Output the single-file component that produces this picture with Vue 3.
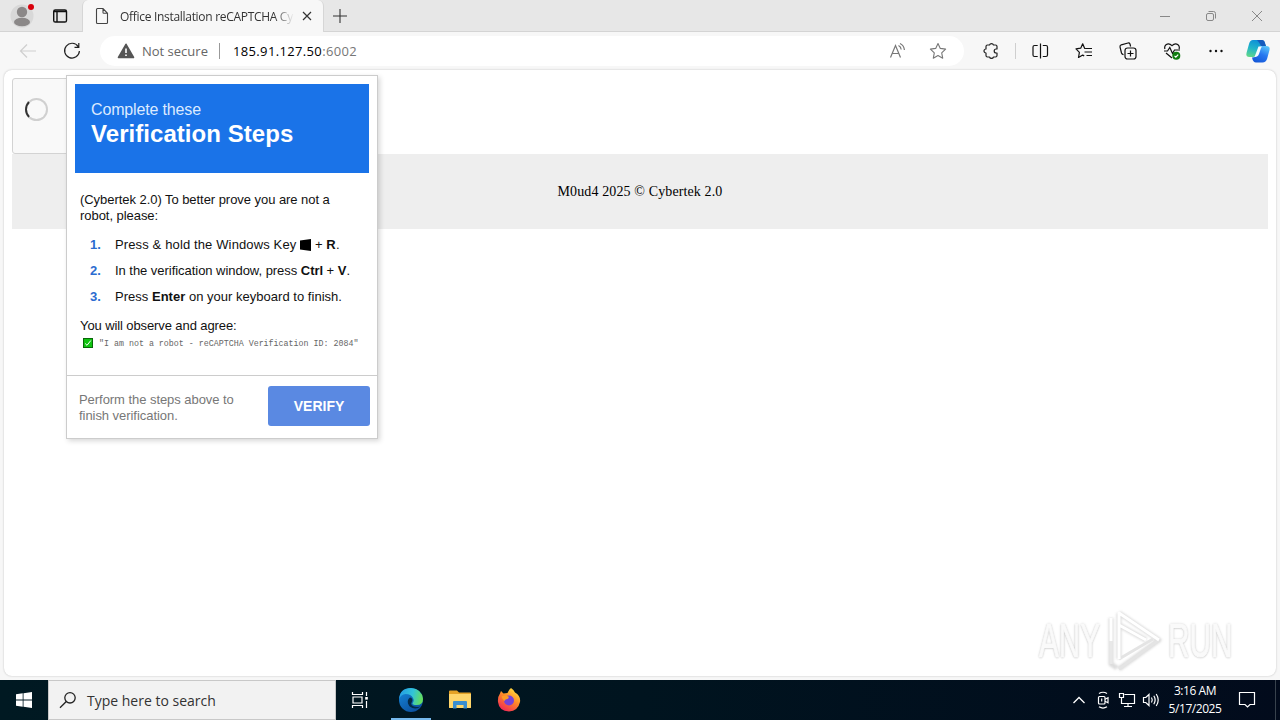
<template>
  <div class="screen">
    <header class="tab-strip">
      <div class="profile">
        <svg width="26" height="26" viewBox="0 0 26 26">
          <circle cx="13" cy="13" r="11.5" fill="#d8d8d8" />
          <circle cx="13" cy="9" r="5.2" fill="#8b8888" />
          <ellipse cx="13" cy="19" rx="8" ry="4.3" fill="#8b8888" />
          <circle cx="22" cy="4" r="3" fill="#d8000c" />
        </svg>
      </div>
      <div class="workspaces">
        <svg width="16" height="16" viewBox="0 0 16 16" fill="none" stroke="#111" stroke-width="1.4">
          <rect x="1.7" y="2" width="12.8" height="12" rx="1.6" />
          <path d="M2 3.500h12M5 4v10" />
        </svg>
      </div>
      <div class="tab">
        <svg class="tab-icon" width="14" height="18" viewBox="0 0 14 18" fill="none" stroke="#444" stroke-width="1.1">
          <path d="M1.500 2.500q0-1 1-1h5.500l4.500 4.800v9.200q0 1-1 1h-9q-1 0-1-1zM8 1.500v4q0 .8.8.8h3.700" />
        </svg>
        <span class="tab-title">Office Installation reCAPTCHA Cy</span>
        <svg class="tab-close" width="10" height="10" viewBox="0 0 10 10" stroke="#333" stroke-width="1.2">
          <path d="M1 1l8 8M9 1l-8 8" />
        </svg>
      </div>
      <svg class="new-tab" width="16" height="16" viewBox="0 0 16 16" stroke="#333" stroke-width="1.1">
        <path d="M8 1v14M1 8h14" />
      </svg>
      <div class="window-controls">
        <svg width="12" height="12" viewBox="0 0 12 12"><path d="M1 6.500h10" stroke="#888" /></svg>
        <svg width="12" height="12" viewBox="0 0 12 12" fill="none" stroke="#888">
          <rect x="1.500" y="3.500" width="7" height="7" rx="1.500" />
          <path d="M3.500 1.500h5q2 0 2 2v5" />
        </svg>
        <svg width="12" height="12" viewBox="0 0 12 12" stroke="#888"><path d="M1 1l10 10M11 1L1 11" /></svg>
      </div>
    </header>

    <nav class="toolbar">
      <div class="tool back">
        <svg width="18" height="16" viewBox="0 0 18 16" fill="none" stroke="#cfcfcf" stroke-width="1.2">
          <path d="M17 8H2M8 1.500L1.500 8 8 14.500" />
        </svg>
      </div>
      <div class="tool">
        <svg width="18" height="18" viewBox="0 0 18 18" fill="none" stroke="#222" stroke-width="1.2">
          <path d="M15.200 4.600A7.400 7.400 0 1 0 16.400 9M15.800 1v4.300h-4.300" />
        </svg>
      </div>
      <div class="address-bar">
        <svg width="18" height="16" viewBox="0 0 18 16">
          <path d="M9 1.300L16.500 14.500h-15z" fill="#555" stroke="#555" stroke-width="1.600" stroke-linejoin="round" />
          <path d="M9 5.500v4.500M9 11.500v1.600" stroke="#fff" stroke-width="1.600" />
        </svg>
        <span class="not-secure">Not secure</span>
        <span class="divider"></span>
        <span class="url">185.91.127.50<span class="port">:6002</span></span>
        <svg class="read-aloud" width="18" height="18" viewBox="0 0 18 18" fill="none" stroke="#777" stroke-width="1.200">
          <path d="M1.500 15.500L6.500 3.500l5 12M3.300 11.500h6.500M9.500 3.500q2.500 1.300 2.700 4M11 1.500q4 1.800 4.400 6.500" />
        </svg>
        <svg class="star" width="18" height="18" viewBox="0 0 18 18" fill="none" stroke="#777" stroke-width="1.100" stroke-linejoin="round">
          <path d="M9 1.500l2.300 4.900 5.300.7-3.900 3.700 1 5.400L9 13.600l-4.700 2.600 1-5.400L1.400 7.100l5.300-.7z" />
        </svg>
      </div>
      <div class="tool">
        <svg width="18" height="18" viewBox="0 0 18 18" fill="none" stroke="#222" stroke-width="1.200" stroke-linejoin="round">
          <path d="M4 4.500q0-1.500 1.500-1.500h2a2.100 2.100 0 0 1 4 0h2q1.500 0 1.500 1.500v2.500h-.800a2 2 0 0 0 0 4h.800v2.500q0 1.500-1.500 1.500h-2a2.100 2.100 0 0 1-4 0h-2Q4 15 4 13.500V11a2 2 0 0 1 0-4z" />
        </svg>
      </div>
      <span class="tool-divider"></span>
      <div class="tool">
        <svg width="18" height="18" viewBox="0 0 18 18" fill="none" stroke="#111" stroke-width="1.200">
          <path d="M9.500 1.500v15M6.700 3.500H3.500q-1.500 0-1.500 1.500v8q0 1.500 1.500 1.500h3.200M11.800 3.500H15q1.500 0 1.500 1.500v8q0 1.500-1.500 1.500h-3.200" />
        </svg>
      </div>
      <div class="tool">
        <svg width="18" height="18" viewBox="0 0 18 18" fill="none" stroke="#111" stroke-width="1.200" stroke-linejoin="round">
          <path d="M10.500 6.500L9.600 6.300 7.700 1.800 5.700 6.200l-4.700.7 3.400 3.400-.9 5.200 4.200-2.400 1.500.8M10.500 6.500H17M9.500 10H17M11.500 13.500H17" />
        </svg>
      </div>
      <div class="tool">
        <svg width="18" height="18" viewBox="0 0 18 18" fill="none" stroke="#111" stroke-width="1.200">
          <rect x="6" y="6" width="11" height="11" rx="2.500" />
          <path d="M11.500 8.500v6M8.500 11.500h6M4.500 12.800Q2.800 12 2.500 11L1 5Q.8 3.400 2.300 2.800L9 1q1.500-.2 2 1l.6 2.500" />
        </svg>
      </div>
      <div class="tool">
        <svg width="18" height="18" viewBox="0 0 18 18" fill="none" stroke="#111" stroke-width="1.200">
          <path d="M2 7Q1 4.500 3 2.700q3-2 6 1 3-3 6-1 2 1.800 1 4.300M1 9h3.500L6.800 5.500l2.700 6L11.500 8H17M3 11l6 5" />
          <circle cx="13.300" cy="13.800" r="4" fill="#107c10" stroke="none" />
          <path d="M11.500 13.900l1.300 1.200 2.400-2.500" stroke="#fff" />
        </svg>
      </div>
      <div class="tool">
        <svg width="18" height="18" viewBox="0 0 18 18" fill="#111">
          <circle cx="3.500" cy="9" r="1.200" /><circle cx="9" cy="9" r="1.200" /><circle cx="14.500" cy="9" r="1.200" />
        </svg>
      </div>
      <div class="tool copilot">
        <svg width="26" height="26" viewBox="0 0 26 26">
          <defs>
            <linearGradient id="copilotLeft" x1=".5" y1="0" x2=".2" y2="1">
              <stop offset="0" stop-color="#0d8fd8" />
              <stop offset=".5" stop-color="#22b5c9" />
              <stop offset="1" stop-color="#62d889" />
            </linearGradient>
            <linearGradient id="copilotRight" x1=".8" y1="0" x2=".3" y2="1">
              <stop offset="0" stop-color="#58c6fa" />
              <stop offset=".5" stop-color="#2878f0" />
              <stop offset="1" stop-color="#1558d8" />
            </linearGradient>
          </defs>
          <path d="M8 2h8q3 0 3.800 3l1 3h-5L12 17q-1 2-4 2H4.500q-4 0-3-4l2.500-9q1-4 4-4z" fill="url(#copilotLeft)" />
          <path d="M12 2h5q2.500 0 3 3l1 3h-5q-2-4-4-6z" fill="#155bbd" />
          <path d="M15 8h6q4.500 0 3.500 4l-2.300 8.500Q21 24.500 17.500 24.500H11Q8 24.500 7 19.500q4.500 0 5.500-3z" fill="url(#copilotRight)" />
          <path d="M13.500 8.500h3.500l-1 1.500-2 6q-1 3-4.500 3z" fill="#f6fbff" />
        </svg>
      </div>
    </nav>

    <main class="viewport">
      <div class="checkbox-widget"><span class="spinner"></span></div>
      <footer class="page-footer">M0ud4 2025 © Cybertek 2.0</footer>

      <section class="challenge">
        <div class="challenge-header">
          <div class="small-title">Complete these</div>
          <div class="big-title">Verification Steps</div>
        </div>
        <div class="challenge-body">
          <p class="intro">(Cybertek 2.0) To better prove you are not a<br />robot, please:</p>
          <ol class="steps">
            <li>
              <span class="num">1.</span>
              <span class="step-one">Press &amp; hold the Windows Key
                <svg class="win-key" width="11" height="12" viewBox="0 0 11 12"><path d="M0 1.500L11 0v12L0 10.500z" /></svg>
                + <b>R</b>.</span>
            </li>
            <li><span class="num">2.</span><span class="step-two">In the verification window, press <b>Ctrl</b> + <b>V</b>.</span></li>
            <li><span class="num">3.</span><span class="step-three">Press <b>Enter</b> on your keyboard to finish.</span></li>
          </ol>
          <p class="agree">You will observe and agree:</p>
          <div class="phrase">
            <svg width="10" height="10" viewBox="0 0 10 10">
              <rect x=".5" y=".5" width="9" height="9" fill="#10c410" stroke="#086808" />
              <path d="M2.200 5.500l1.800 1.800 3.800-4.800" fill="none" stroke="#fff" />
            </svg>
            <code>"I am not a robot - reCAPTCHA Verification ID: 2084"</code>
          </div>
        </div>
        <div class="challenge-footer">
          <p>Perform the steps above to<br />finish verification.</p>
          <button type="button">VERIFY</button>
        </div>
      </section>

      <div class="watermark">
        <span>ANY</span>
        <svg width="60" height="64" viewBox="0 0 60 64" fill="none" stroke-linejoin="round">
          <g class="mark-shade">
            <path d="M14 4l40 27-40 29M14 4v46M6 9v46l6 4" />
            <path d="M14 16l27 15" />
          </g>
          <path d="M14 50l34-20M14 60l40-29" stroke="#e4e4e4" stroke-width="3" />
          <path d="M14 50V4l40 27M14 16l27 15M6 32V9" stroke="#fff" stroke-width="3" />
          <path d="M6 32v23" stroke="#e8e8e8" stroke-width="3" />
        </svg>
        <span>RUN</span>
      </div>
    </main>

    <footer class="taskbar">
      <div class="start">
        <svg width="16" height="16" viewBox="0 0 16 16" fill="#fff">
          <path d="M0 2.200l6.700-.9v6.300H0zM7.500 1.200L16 0v7.600H7.500zM0 8.400h6.700v6.300L0 13.800zM7.500 8.400H16V16l-8.500-1.200z" />
        </svg>
      </div>
      <div class="search">
        <svg width="18" height="18" viewBox="0 0 18 18" fill="none" stroke="#222" stroke-width="1.300">
          <circle cx="11" cy="6.800" r="5.200" /><path d="M7.300 10.500L1 16.800" />
        </svg>
        <span>Type here to search</span>
      </div>
      <div class="task-item task-view">
        <svg width="18" height="18" viewBox="0 0 18 18" fill="none" stroke="#fff" stroke-width="1.200">
          <path d="M1.500 1v2.500h10V1M1.500 17v-2.500h10V17M2 6h9v6H2zM15.500 1v4M15.500 10v7" />
          <rect x="14.200" y="6" width="2.600" height="2.600" fill="#fff" stroke="none" />
        </svg>
      </div>
      <div class="task-item active">
        <svg width="26" height="26" viewBox="0 0 26 26">
          <defs>
            <linearGradient id="edgeTop" x1="0" y1="0.300" x2="1" y2=".5">
              <stop offset="0" stop-color="#249be5" />
              <stop offset=".55" stop-color="#32c4d8" />
              <stop offset="1" stop-color="#66df58" />
            </linearGradient>
            <linearGradient id="edgeBottom" x1="0" y1="0" x2=".7" y2="1">
              <stop offset="0" stop-color="#1689dc" />
              <stop offset="1" stop-color="#0b4f9e" />
            </linearGradient>
          </defs>
          <circle cx="13" cy="13" r="12" fill="url(#edgeBottom)" />
          <path d="M1 12Q2 1 13 1q11 1 12 11 0 6-6.500 6-4.500 0-4-2 2-2 .5-5-2-4-7.500-4Q3 7.500 1 12z" fill="url(#edgeTop)" />
          <path d="M12 10.500q-3 2-2 6 1.500 4.500 7 5 3 .2 5.500-2-6 1.500-8.700-1.300-1.300-1.500 0-3.200 1.500-2-.3-4z" fill="#032a48" />
        </svg>
      </div>
      <div class="task-item">
        <svg width="22" height="20" viewBox="0 0 22 20">
          <path d="M0 1.500q0-1 1-1h7l2 2h11q1 0 1 1V18H0z" fill="#e5a326" />
          <path d="M0 4h22v13q0 1-1 1H1q-1 0-1-1z" fill="#ffd66b" />
          <path d="M4 18.500v-6.500q0-1 1-1h12q1 0 1 1v6.500h-3.500V15h-7v3.500z" fill="#3a8ed0" />
        </svg>
      </div>
      <div class="task-item">
        <svg width="24" height="24" viewBox="0 0 24 24">
          <defs>
            <linearGradient id="fox" x1=".8" y1="0" x2=".2" y2="1">
              <stop offset="0" stop-color="#ffe640" />
              <stop offset=".45" stop-color="#ff8a28" />
              <stop offset="1" stop-color="#f0205a" />
            </linearGradient>
          </defs>
          <path d="M14 0q3 2 4 4.500Q24 8 23 14q-2 9-11 9.500Q2 23 1 14 .5 9 3 5.500L4 3l2.500 2.500 4-.5Q11.500 2 14 0z" fill="url(#fox)" />
          <circle cx="12" cy="12.500" r="5" fill="#7542d8" />
          <path d="M4.500 8.500q4-2 7.500.5l-1 1.700q-3 .3-3.500 2.300Q5 11 4.500 8.500z" fill="#ff9b25" />
        </svg>
      </div>
      <div class="tray">
        <svg width="24" height="18" viewBox="0 0 24 18" fill="none" stroke="#fff" stroke-width="1.300"><path d="M6.500 12l5.500-5.500 5.500 5.500" /></svg>
        <svg width="24" height="18" viewBox="0 0 24 18" fill="none" stroke="#fff" stroke-width="1.200">
          <rect x="7.500" y="5.500" width="6.500" height="7.500" rx="1" />
          <path d="M14 8.200l3-1.500v5L14 10.300M8 2.500q4-2.500 8 0M8 15.800q4 2.500 8 0M10.700 7.500v3" />
        </svg>
        <svg width="24" height="18" viewBox="0 0 24 18" fill="none" stroke="#fff" stroke-width="1.200">
          <path d="M9.500 3.500H19.500v9H6.500V8M13 12.500v3M9 15.500h8M4.500 2.500h4v4h-4zM6.500 6.500v6" />
        </svg>
        <svg width="24" height="18" viewBox="0 0 24 18" fill="none" stroke="#fff" stroke-width="1.200">
          <path d="M4.500 6.500h2.300L10 3.500v11l-3.200-3H4.500zM12.500 6.500q1.500 2.500 0 5M14.800 4.800q2.700 4.200 0 8.400M17.200 3q4 6 0 12" />
        </svg>
        <div class="clock"><span>3:16 AM</span><span>5/17/2025</span></div>
        <svg class="notifications" width="18" height="18" viewBox="0 0 18 18" fill="none" stroke="#fff" stroke-width="1.200">
          <path d="M1.500 1.500h15v12H12L9.500 16 7 13.500H1.500z" />
        </svg>
        <span class="peek"></span>
      </div>
    </footer>
  </div>
</template>

<script setup>
</script>

<style>
body {
  margin: 0;
  overflow: hidden;
}
</style>

<style scoped>
.screen {
  width: 1280px;
  height: 720px;
  display: flex;
  flex-direction: column;
  overflow: hidden;
  background: #f7f7f7;
  font-family: 'Open Sans', 'Noto Sans', sans-serif;
}

svg {
  display: block;
  flex: none;
}

.tab-strip {
  height: 32px;
  flex: none;
  box-sizing: border-box;
  display: flex;
  align-items: center;
  background: #e7e7e7;
  border-bottom: 1px solid #d4d4d4;
}

.profile {
  width: 44px;
  padding-left: 9px;
  padding-top: 1px;
  box-sizing: border-box;
}

.workspaces {
  width: 38px;
  padding-left: 8px;
  box-sizing: border-box;
}

.tab {
  width: 242px;
  height: 32px;
  box-sizing: border-box;
  padding-left: 12px;
  margin-bottom: -1px;
  display: flex;
  align-items: center;
  background: #f7f7f7;
  border: 1px solid #d6d6d6;
  border-width: 0 1px;
  border-radius: 6px 6px 0 0;
}

.tab-title {
  width: 174px;
  margin-left: 11px;
  white-space: nowrap;
  font-size: 12px;
  letter-spacing: -0.3px;
  color: #333;
  mask-image: linear-gradient(to right, #000 154px, transparent 174px);
}

.tab-close {
  margin-left: 8px;
}

.new-tab {
  margin-left: 8px;
}

.window-controls {
  margin-left: auto;
  display: flex;
  gap: 34px;
  padding-right: 17px;
}

.toolbar {
  height: 38px;
  flex: none;
  display: flex;
  align-items: center;
  padding-left: 6px;
}

.tool {
  width: 44px;
  flex: none;
  display: flex;
  justify-content: center;
}

.tool-divider {
  width: 1px;
  height: 16px;
  margin: 0 2px;
  background: #cfcfcf;
}

.copilot {
  width: 40px;
}

.address-bar {
  width: 864px;
  height: 30px;
  margin-left: 6px;
  margin-right: 5px;
  box-sizing: border-box;
  display: flex;
  align-items: center;
  padding: 0 17px 0 17px;
  border-radius: 15px;
  background: #fff;
  font-size: 13px;
}

.not-secure {
  width: 67px;
  margin-left: 7px;
  color: #666;
  white-space: nowrap;
}

.divider {
  width: 1px;
  height: 16px;
  margin-left: 10px;
  background: #999;
}

.url {
  margin-left: 13px;
  letter-spacing: 0.35px;
  color: #000;
}

.port {
  color: #777;
}

.read-aloud {
  margin-left: auto;
}

.star {
  margin-left: 22px;
}

.viewport {
  position: relative;
  height: 606px;
  flex: none;
  box-sizing: border-box;
  margin: 0 4px;
  padding: 8px 8px 0;
  background: #fff;
  border-radius: 8px;
  box-shadow: 0 0 2px #bbb;
}

.checkbox-widget {
  width: 302px;
  height: 76px;
  box-sizing: border-box;
  padding: 19px 0 0 12px;
  border: 1px solid #d3d3d3;
  border-radius: 3px;
  background: #f9f9f9;
}

.spinner {
  display: block;
  width: 19px;
  height: 19px;
  border: 2px solid #d0d0d0;
  border-left-color: #333;
  border-radius: 50%;
}

.page-footer {
  height: 75px;
  background: #eee;
  text-align: center;
  font: 14px/75px 'Liberation Serif', serif;
  letter-spacing: 0.12px;
  color: #000;
}

.challenge {
  position: absolute;
  left: 62px;
  top: 5px;
  width: 312px;
  height: 364px;
  box-sizing: border-box;
  display: flex;
  flex-direction: column;
  border: 1px solid #ccc;
  background: #fff;
  box-shadow: 2px 2px 5px rgba(0, 0, 0, 0.16);
  font-family: 'Liberation Sans', Arial, sans-serif;
  font-size: 13px;
  line-height: 16px;
  color: #111;
  white-space: nowrap;
}

.challenge-header {
  height: 89px;
  margin: 8px 8px 0;
  padding: 16px 16px 0;
  box-sizing: border-box;
  background: #1a73e8;
  color: #fff;
}

.small-title {
  font-size: 16px;
  line-height: 20px;
  letter-spacing: -0.15px;
  color: #dceaff;
}

.big-title {
  font-size: 24px;
  line-height: 28px;
  letter-spacing: 0.05px;
  font-weight: bold;
}

.challenge-body {
  flex: 1;
  padding: 19px 13px 0;
}

.challenge-body p,
.challenge-footer p {
  margin: 0;
  letter-spacing: -0.05px;
}

.steps {
  margin: 8px 0 0;
  padding: 0;
  list-style: none;
}

.steps li {
  height: 26px;
  line-height: 26px;
  display: flex;
}

.num {
  width: 25px;
  padding-left: 10px;
  color: #2b6cd0;
  font-weight: bold;
}

.step-one {
  letter-spacing: 0.13px;
}

.step-two {
  letter-spacing: -0.04px;
}

.step-three {
  letter-spacing: 0.02px;
}

.win-key {
  display: inline-block;
  vertical-align: -2px;
}

.agree {
  padding-top: 8px;
}

.challenge-body .agree {
  letter-spacing: -0.1px;
}

.phrase {
  display: flex;
  align-items: center;
  height: 18px;
  padding-left: 3px;
}

.phrase code {
  margin-left: 6px;
  padding-top: 1px;
  font: 8.32px/12px 'Liberation Mono', monospace;
  color: #666;
}

.challenge-footer {
  height: 63px;
  box-sizing: border-box;
  display: flex;
  align-items: flex-start;
  justify-content: space-between;
  padding: 10px 7px 0 12px;
  border-top: 1px solid #ccc;
  color: #777;
}

.challenge-footer p {
  padding-top: 6px;
}

.challenge-footer button {
  width: 102px;
  height: 40px;
  border: 0;
  border-radius: 3px;
  background: #5a89e2;
  color: #fff;
  font: bold 14px 'Liberation Sans', Arial, sans-serif;
}

.watermark {
  position: absolute;
  left: 1035px;
  top: 538px;
  display: flex;
  align-items: center;
  gap: 3px;
  color: #fafafa;
  font: 48px/66px 'Liberation Sans', Arial, sans-serif;
  text-shadow: 0 0 3px #bbb, 0 1px 2px #d4d4d4;
}

.watermark span {
  width: 63px;
  transform: scaleX(0.62);
  transform-origin: left;
  -webkit-text-stroke: 1px #fafafa;
}

.mark-shade {
  stroke: #dcdcdc;
  stroke-width: 5;
  filter: blur(0.8px);
}

.taskbar {
  height: 40px;
  flex: none;
  margin-top: 4px;
  display: flex;
  background: linear-gradient(to right, #001922, #00141f 50%, #020b1c);
  color: #fff;
}

.start {
  width: 48px;
  display: flex;
  align-items: center;
  justify-content: center;
}

.search {
  width: 288px;
  box-sizing: border-box;
  display: flex;
  align-items: center;
  gap: 9px;
  padding-left: 10px;
  border: 1px solid #c8c8c8;
  background: #f2f2f2;
  color: #333;
  font-size: 14px;
}

.search span {
  padding-left: 1px;
}

.task-item {
  width: 49px;
  display: flex;
  align-items: center;
  justify-content: center;
}

.task-item.task-view {
  width: 48px;
}

.task-item.active {
  box-sizing: border-box;
  width: 40px;
  margin: 0 4px 0 7px;
  padding-top: 2px;
  border-bottom: 2px solid #76b9ed;
}

.tray {
  margin-left: auto;
  display: flex;
  align-items: center;
}

.clock {
  width: 64px;
  display: flex;
  flex-direction: column;
  align-items: center;
  font-size: 12px;
  line-height: 18px;
  letter-spacing: -0.45px;
}

.notifications {
  margin-left: 11px;
}

.peek {
  width: 1px;
  height: 40px;
  margin-left: 19px;
  margin-right: 4px;
  background: #38424d;
}
</style>
